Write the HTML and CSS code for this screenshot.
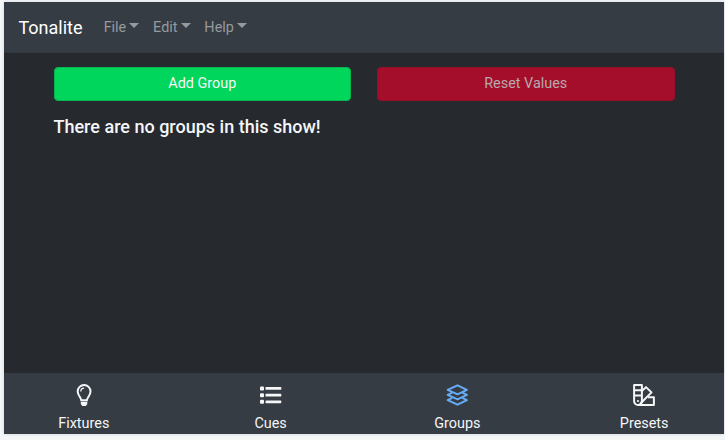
FILE: index.html
```
<!DOCTYPE html>
<html lang="en">
<head>
<meta charset="utf-8">
<title>Tonalite</title>
<link rel="stylesheet" href="styles.css">
</head>
<body>
<div class="app">
  <nav class="navbar">
    <span class="brand">Tonalite</span>
    <span class="menu">File<i class="caret"></i></span>
    <span class="menu">Edit<i class="caret"></i></span>
    <span class="menu">Help<i class="caret"></i></span>
  </nav>
  <main class="content">
    <div class="actions">
      <button class="btn btn-add">Add Group</button>
      <button class="btn btn-reset">Reset Values</button>
    </div>
    <h5 class="message">There are no groups in this show!</h5>
  </main>
  <footer class="tabs">
    <div class="tab">
      <svg class="icon" viewBox="0 0 22 22" fill="none" stroke="currentColor" stroke-width="2">
        <path d="M8.3 16.2C8.1 13.3 4.7 11.5 4.7 7.4a6.4 6.4 0 0 1 12.8 0c0 4.1-3.4 5.9-3.6 8.8z"/>
        <path stroke-width="1.3" d="M7.8 7.5c0-2 1.4-3.3 3.3-3.3"/>
        <path fill="currentColor" stroke="none" d="M7.8 17.8h6.500v2.300L12.800 22H9.300L7.800 20.100z"/>
      </svg>
      <span>Fixtures</span>
    </div>
    <div class="tab">
      <svg class="icon" viewBox="0.5 0 22 22" fill="currentColor">
        <rect x="0.500" y="2.400" width="4" height="4" rx="1"/><rect x="0.500" y="9.200" width="4" height="4" rx="1"/><rect x="0.500" y="15.800" width="4" height="4" rx="1"/>
        <rect x="6" y="3" width="15.800" height="2.800" rx=".6"/><rect x="6" y="9.800" width="15.800" height="2.800" rx=".6"/><rect x="6" y="16.400" width="15.800" height="2.800" rx=".6"/>
      </svg>
      <span>Cues</span>
    </div>
    <div class="tab">
      <svg class="icon icon-active" viewBox="-0.5 0 22 22" fill="none" stroke="currentColor" stroke-width="2" stroke-linejoin="round">
        <path d="M11 1.300 20.400 5.800 11 10.300 1.200 5.800z"/>
        <path d="M5.700 8.700 1.200 10.900l9.800 4.500 9.400-4.500-4.500-2.200"/>
        <path d="M5.700 13.900 1.200 16.100l9.800 4.600 9.400-4.600-4.500-2.200"/>
      </svg>
      <span>Groups</span>
    </div>
    <div class="tab">
      <svg class="icon" viewBox="0 0 22 22" fill="none" stroke="currentColor" stroke-width="2" stroke-linejoin="round">
        <path d="M1.100 1.100h7.800v16a3.900 3.900 0 0 1-7.800 0zM1.100 6.200h7.800M1.100 11.600h7.800"/>
        <path d="M8.900 7 13 3.100l5.500 5.300L7 20"/>
        <path d="M15 13.300h5.900v7.600H5"/>
        <circle cx="5" cy="17" r="1.100" fill="currentColor" stroke="none"/>
      </svg>
      <span>Presets</span>
    </div>
  </footer>
</div>
</body>
</html>
```
FILE: styles.css
```
* { box-sizing: border-box; }
body {
  margin: 0;
  padding: 2px 1px 6px 4px;
  height: 440px;
  overflow: hidden;
  background: #f5f6f7;
  font-family: Roboto, sans-serif;
  font-size: 14.4px;
  color: #f5f6f7;
}
.app {
  height: 432px;
  display: flex;
  flex-direction: column;
  background: #26292e;
  box-shadow: 0 0 3px #cbd2d9;
}
.navbar {
  height: 51px;
  flex: none;
  display: flex;
  align-items: center;
  padding: 0 14.4px;
  background: #363c44;
  border-bottom: 1px solid #30363d;
}
.brand { font-size: 18px; margin-right: 21.2px; color: #fff; }
.menu {
  display: flex;
  align-items: center;
  margin-right: 13.7px;
  color: #96999d;
}
.caret {
  margin: -3px 0 0 3.2px;
  border: 5px solid transparent;
  border-top-color: currentColor;
  border-bottom: 0;
}
.content { flex: 1; padding: 14px 49.5px 0; }
.actions { display: grid; grid-template-columns: 1fr 1fr; gap: 26px; }
.btn {
  height: 34px;
  padding: 0 0 1px;
  border: 1px solid;
  border-radius: 4px;
  font: 14.4px Roboto, sans-serif;
}
.btn-add { background: #00d65b; border-color: #08b650; color: #f5f6f7; }
.btn-reset { background: #a50e2b; border-color: #970f29; color: #b6a9ac; }
.message { margin: 15px 0 0; font-size: 18px; line-height: 22px; font-weight: 500; }
.tabs {
  height: 61px;
  flex: none;
  display: grid;
  grid-template-columns: repeat(4, 186.8px);
  justify-content: center;
  background: #363c44;
}
.tab {
  display: flex;
  flex-direction: column;
  align-items: center;
  padding-top: 11px;
  line-height: 18px;
}
.icon { width: 22px; height: 22px; margin-bottom: 9px; }
.icon-active { color: #67acf8; }
```
